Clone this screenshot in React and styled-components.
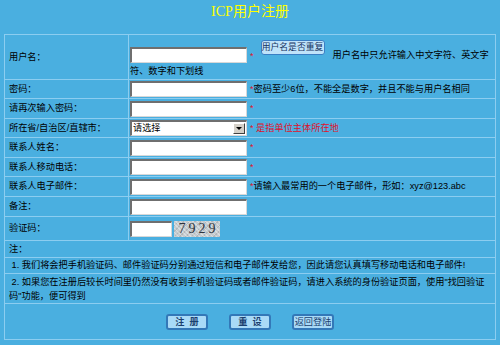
import React from "react";
import styled, { createGlobalStyle } from "styled-components";

const Global = createGlobalStyle`
  html, body { margin: 0; padding: 0; background: #4aafe0; }
  body {
    font-family: "Liberation Sans", "Noto Sans CJK SC", sans-serif;
    font-size: 9.2px;
    color: #000;
  }
`;

const Page = styled.div`
  width: 500px;
  height: 345px;
  background: #4aafe0;
  display: flex;
  flex-direction: column;
  overflow: hidden;
`;

const Title = styled.div`
  height: 34px;
  box-sizing: border-box;
  padding-top: 3px;
  text-align: center;
  color: #ffff00;
  font-family: "Liberation Serif", "Noto Sans CJK SC", serif;
  font-size: 14px;
  line-height: 18px;
`;

const Table = styled.table`
  margin: 0 4px;
  width: 492px;
  border-collapse: collapse;
  border: 1px solid #8ccdf0;
  table-layout: fixed;
`;

const Row = styled.tr`
  height: ${(p) => p.$h}px;
`;

const Cell = styled.td`
  border: 1px solid #8ccdf0;
  padding: 0 ${(p) => (p.$pl != null ? p.$pl : 1)}px;
  vertical-align: ${(p) => (p.$top ? "top" : "middle")};
  line-height: ${(p) => p.$lh || 13}px;
  text-align: left;
`;

const LabelCell = styled(Cell)`
  width: 118px;
  padding-left: 4px;
  vertical-align: middle;
`;

const Field = styled.div`
  display: flex;
  align-items: center;
  white-space: nowrap;
`;

const TextInput = styled.div`
  box-sizing: border-box;
  width: ${(p) => p.$w || 117}px;
  height: 16px;
  background: #fff;
  border-top: 2px solid #6f6f6f;
  border-left: 2px solid #6f6f6f;
  border-right: 1px solid #d8d8d8;
  border-bottom: 1px solid #d8d8d8;
  flex: none;
`;

const Star = styled.span`
  color: #e0102a;
  margin-left: 3px;
  font-size: 9px;
`;

const Hint = styled.span`
  color: ${(p) => (p.$red ? "#e0102a" : "#000")};
`;

const SmallButton = styled.div`
  box-sizing: border-box;
  width: 64px;
  height: 15px;
  line-height: 13px;
  text-align: center;
  font-size: 8.8px;
  border: 1px solid #3a7fc4;
  border-radius: 3px;
  background: #bfe3fa;
  color: #15325e;
  white-space: nowrap;
`;

const UserCellInner = styled.div`
  padding-top: 5px;
`;

const UserRow = styled.div`
  display: flex;
  align-items: flex-end;
  height: 23px;
  white-space: nowrap;
`;

const UserButtonWrap = styled.div`
  align-self: flex-start;
  margin-left: 7px;
  margin-right: 8px;
`;

const UserHint = styled.span`
  margin-bottom: 1px;
`;

const WrapLine = styled.div`
  margin-top: 2px;
`;

const SelectBox = styled.div`
  box-sizing: border-box;
  width: 117px;
  height: 16px;
  background: #fff;
  border-top: 2px solid #6f6f6f;
  border-left: 2px solid #6f6f6f;
  border-right: 1px solid #d8d8d8;
  border-bottom: 1px solid #d8d8d8;
  display: flex;
  align-items: center;
  justify-content: space-between;
  padding-left: 1px;
  flex: none;
`;

const ArrowBox = styled.div`
  width: 12px;
  height: 11px;
  margin-right: 1px;
  background: #d4d0c8;
  border: 1px solid;
  border-color: #fff #404040 #404040 #fff;
  box-sizing: border-box;
  display: flex;
  align-items: center;
  justify-content: center;
  &::after {
    content: "";
    border-left: 3px solid transparent;
    border-right: 3px solid transparent;
    border-top: 3px solid #000;
  }
`;

const Captcha = styled.div`
  margin-left: 2px;
  width: 46px;
  height: 16px;
  background-color: #c4cbcf;
  background-image: repeating-linear-gradient(45deg, rgba(255,255,255,0.35) 0 1px, transparent 1px 3px),
    repeating-linear-gradient(-45deg, rgba(120,120,120,0.25) 0 1px, transparent 1px 4px);
  color: #2d333d;
  font-family: "Liberation Serif", serif;
  font-size: 14px;
  letter-spacing: 3px;
  text-indent: 3px;
  line-height: 16px;
  text-align: center;
  flex: none;
`;

const Buttons = styled.div`
  display: flex;
  justify-content: center;
  gap: 21px;
`;

const BigButton = styled.div`
  box-sizing: border-box;
  width: 42px;
  height: 16px;
  line-height: 12px;
  border: 2px solid #3378b8;
  border-radius: 3px;
  background: #a9daf7;
  color: #1b3f6e;
  text-align: center;
  white-space: pre;
  font-weight: ${(p) => (p.$bold ? "bold" : "normal")};
`;

const fields = [
  { label: "密码：", h: 19, star: true, hint: "密码至少6位，不能全是数字，并且不能与用户名相同" },
  { label: "请再次输入密码：", h: 20, star: true },
  { label: "所在省/自治区/直辖市：", h: 19, select: true },
  { label: "联系人姓名：", h: 20, star: true },
  { label: "联系人移动电话：", h: 19, star: true },
  { label: "联系人电子邮件：", h: 20, star: true, hint: "请输入最常用的一个电子邮件，形如：xyz@123.abc" },
  { label: "备注：", h: 20 },
];

export default function App() {
  return (
    <Page>
      <Global />
      <Title>ICP用户注册</Title>
      <Table>
        <tbody>
          <Row $h={45}>
            <LabelCell>用户名：</LabelCell>
            <Cell $top>
              <UserCellInner>
                <UserRow>
                  <TextInput />
                  <Star>*</Star>
                  <UserButtonWrap>
                    <SmallButton>用户名是否重复</SmallButton>
                  </UserButtonWrap>
                  <UserHint>用户名中只允许输入中文字符、英文字</UserHint>
                </UserRow>
                <WrapLine>符、数字和下划线</WrapLine>
              </UserCellInner>
            </Cell>
          </Row>
          {fields.map((f) => (
            <Row key={f.label} $h={f.h}>
              <LabelCell>{f.label}</LabelCell>
              <Cell>
                <Field>
                  {f.select ? (
                    <>
                      <SelectBox>
                        <span>请选择</span>
                        <ArrowBox />
                      </SelectBox>
                      <Star>*</Star>
                      <Hint $red>&nbsp;是指单位主体所在地</Hint>
                    </>
                  ) : (
                    <>
                      <TextInput />
                      {f.star && <Star>*</Star>}
                      {f.hint && <Hint>{f.hint}</Hint>}
                    </>
                  )}
                </Field>
              </Cell>
            </Row>
          ))}
          <Row $h={24}>
            <LabelCell>验证码：</LabelCell>
            <Cell>
              <Field>
                <TextInput $w={42} />
                <Captcha>7929</Captcha>
              </Field>
            </Cell>
          </Row>
          <Row $h={17}>
            <Cell colSpan={2} $pl={4}>注：</Cell>
          </Row>
          <Row $h={16}>
            <Cell colSpan={2} $pl={4}>
              &nbsp;1. 我们将会把手机验证码、邮件验证码分别通过短信和电子邮件发给您，因此请您认真填写移动电话和电子邮件!
            </Cell>
          </Row>
          <Row $h={30}>
            <Cell colSpan={2} $pl={4} $lh={14}>
              &nbsp;2. 如果您在注册后较长时间里仍然没有收到手机验证码或者邮件验证码，请进入系统的身份验证页面，使用"找回验证码"功能，便可得到
            </Cell>
          </Row>
          <Row $h={36}>
            <Cell colSpan={2}>
              <Buttons>
                <BigButton $bold>{"注  册"}</BigButton>
                <BigButton $bold>{"重  设"}</BigButton>
                <BigButton>返回登陆</BigButton>
              </Buttons>
            </Cell>
          </Row>
        </tbody>
      </Table>
    </Page>
  );
}
